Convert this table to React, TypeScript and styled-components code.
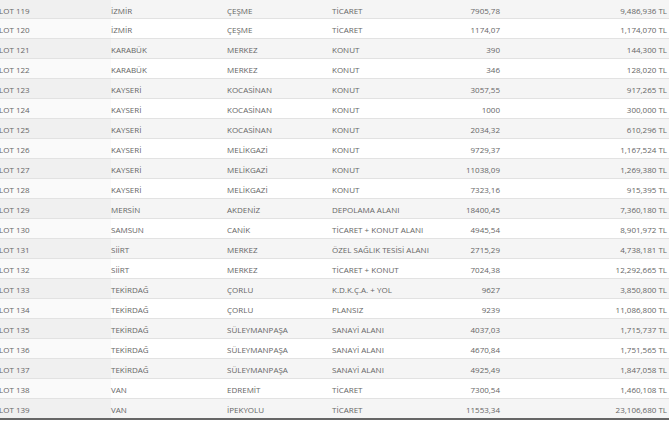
import styled, { createGlobalStyle } from 'styled-components';

const GlobalStyle = createGlobalStyle`
    html, body {
        margin: 0;
        padding: 0;
        background: #fff;
        overflow: hidden;
    }
`;

const rows = [
    ['LOT 119', 'İZMİR', 'ÇEŞME', 'TİCARET', '7905,78', '9,486,936 TL'],
    ['LOT 120', 'İZMİR', 'ÇEŞME', 'TİCARET', '1174,07', '1,174,070 TL'],
    ['LOT 121', 'KARABÜK', 'MERKEZ', 'KONUT', '390', '144,300 TL'],
    ['LOT 122', 'KARABÜK', 'MERKEZ', 'KONUT', '346', '128,020 TL'],
    ['LOT 123', 'KAYSERİ', 'KOCASİNAN', 'KONUT', '3057,55', '917,265 TL'],
    ['LOT 124', 'KAYSERİ', 'KOCASİNAN', 'KONUT', '1000', '300,000 TL'],
    ['LOT 125', 'KAYSERİ', 'KOCASİNAN', 'KONUT', '2034,32', '610,296 TL'],
    ['LOT 126', 'KAYSERİ', 'MELİKGAZİ', 'KONUT', '9729,37', '1,167,524 TL'],
    ['LOT 127', 'KAYSERİ', 'MELİKGAZİ', 'KONUT', '11038,09', '1,269,380 TL'],
    ['LOT 128', 'KAYSERİ', 'MELİKGAZİ', 'KONUT', '7323,16', '915,395 TL'],
    ['LOT 129', 'MERSİN', 'AKDENİZ', 'DEPOLAMA ALANI', '18400,45', '7,360,180 TL'],
    ['LOT 130', 'SAMSUN', 'CANİK', 'TİCARET + KONUT ALANI', '4945,54', '8,901,972 TL'],
    ['LOT 131', 'SİİRT', 'MERKEZ', 'ÖZEL SAĞLIK TESİSİ ALANI', '2715,29', '4,738,181 TL'],
    ['LOT 132', 'SİİRT', 'MERKEZ', 'TİCARET + KONUT', '7024,38', '12,292,665 TL'],
    ['LOT 133', 'TEKİRDAĞ', 'ÇORLU', 'K.D.K.Ç.A. + YOL', '9627', '3,850,800 TL'],
    ['LOT 134', 'TEKİRDAĞ', 'ÇORLU', 'PLANSIZ', '9239', '11,086,800 TL'],
    ['LOT 135', 'TEKİRDAĞ', 'SÜLEYMANPAŞA', 'SANAYİ ALANI', '4037,03', '1,715,737 TL'],
    ['LOT 136', 'TEKİRDAĞ', 'SÜLEYMANPAŞA', 'SANAYİ ALANI', '4670,84', '1,751,565 TL'],
    ['LOT 137', 'TEKİRDAĞ', 'SÜLEYMANPAŞA', 'SANAYİ ALANI', '4925,49', '1,847,058 TL'],
    ['LOT 138', 'VAN', 'EDREMİT', 'TİCARET', '7300,54', '1,460,108 TL'],
    ['LOT 139', 'VAN', 'İPEKYOLU', 'TİCARET', '11553,34', '23,106,680 TL'],
];

const Table = styled.div`
    width: 670px;
    margin: 0 0 0 -1px;
    font-family: 'Open Sans', 'Liberation Sans', sans-serif;
    font-size: 8px;
    color: #666;
`;

const Row = styled.div<{ $striped: boolean; $last: boolean }>`
    display: grid;
    grid-template-columns: 112px 116px 105px 88px 80px 167px;
    height: 19px;
    padding-right: 2px;
    align-items: center;
    background: ${(p) => (p.$striped ? '#f5f5f5' : '#fff')};
    border-bottom: ${(p) => (p.$last ? '2px solid #666' : '1px solid #e2e2e2')};

    &:first-child {
        height: 18px;
    }
`;

const Cell = styled.div<{ $right?: boolean; $lead?: boolean }>`
    align-self: stretch;
    display: flex;
    align-items: center;
    padding-top: 2px;
    justify-content: ${(p) => (p.$right ? 'flex-end' : 'flex-start')};
    white-space: nowrap;
    background: ${(p) => (p.$lead ? 'rgba(0, 0, 0, 0.02)' : 'transparent')};
`;

const App = () => {
    return (
        <>
            <GlobalStyle />
            <Table>
                {rows.map((row, i) => (
                    <Row key={i} $striped={i % 2 === 0} $last={i === rows.length - 1}>
                        <Cell $lead>{row[0]}</Cell>
                        <Cell>{row[1]}</Cell>
                        <Cell>{row[2]}</Cell>
                        <Cell>{row[3]}</Cell>
                        <Cell $right>{row[4]}</Cell>
                        <Cell $right>{row[5]}</Cell>
                    </Row>
                ))}
            </Table>
        </>
    );
};

export default App;
